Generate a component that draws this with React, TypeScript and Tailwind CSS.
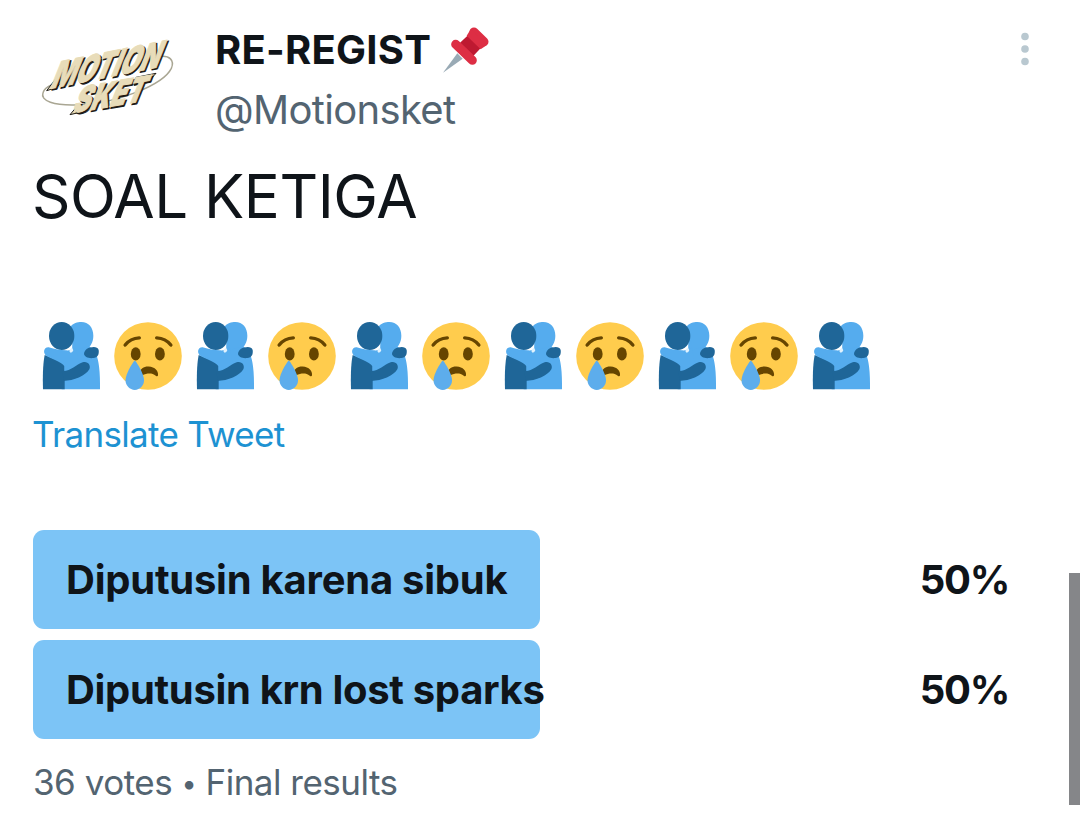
import { ReactNode } from "react";

type PollOption = {
  label: string;
  percent: number;
  tracking: string;
};

const options: PollOption[] = [
  { label: "Diputusin karena sibuk", percent: 50, tracking: "tracking-[-0.24px]" },
  { label: "Diputusin krn lost sparks", percent: 50, tracking: "tracking-[-0.33px]" },
];

const emojis = Array.from({ length: 11 }, (_, i) => (i % 2 === 0 ? "hug" : "cry"));

function LogoWord({ children, matrix, size, length }: { children: ReactNode; matrix: string; size: number; length: number }) {
  return (
    <g
      transform={matrix}
      fontFamily="Inter, sans-serif"
      fontWeight={900}
      fontSize={size}
      strokeLinejoin="round"
    >
      <text x="6" y="5" textLength={length} lengthAdjust="spacingAndGlyphs" fill="#1d1a14" stroke="#1d1a14" strokeWidth="4" aria-hidden="true">
        {children}
      </text>
      <text textLength={length} lengthAdjust="spacingAndGlyphs" fill="#e8dcb9" stroke="#e8dcb9" strokeWidth="3">
        {children}
      </text>
    </g>
  );
}

function Logo() {
  return (
    <svg viewBox="0 0 480 330" className="h-[110px] w-[160px] shrink-0 overflow-visible">
      <path
        d="M385 110C420 104 434 122 424 145C400 194 262 250 150 254C70 258 30 242 39 218C42 208 52 200 66 194"
        fill="none"
        stroke="#a9a693"
        strokeWidth="4.5"
      />
      {/* brush tails on the first and last letters */}
      <path d="M82 170L50 212L76 204L98 186ZM142 258L120 284L146 278L164 262ZM318 172L378 160L352 188L312 196Z" fill="#e8dcb9" stroke="#1d1a14" strokeWidth="3" strokeLinejoin="round" />
      <LogoWord matrix="matrix(1 -0.2 -0.4 1 58 207)" size={114} length={324}>
        MOTION
      </LogoWord>
      <LogoWord matrix="matrix(1 -0.17 -0.4 1 124 280)" size={110} length={212}>
        SKET
      </LogoWord>
    </svg>
  );
}

function Pin() {
  return (
    <svg viewBox="729 21 138 138" className="size-[46px]">
      <path d="M729 158L772 100L788 116Z" fill="#99aab5" />
      <path d="M780 68L812 38L850 76L820 108Z" fill="#be1931" />
      <path d="M767 73L817 121M822 36L852 65" stroke="#dd2e44" strokeWidth="27" strokeLinecap="round" />
      <path d="M812 28L862 74L842 88L800 47Z" fill="#dd2e44" />
    </svg>
  );
}

function Hug() {
  return (
    <svg viewBox="21 35 204 204" className="size-[68px]">
      <path d="M120 50C130 38 142 35 154 35C176 35 190 52 190 76C190 96 180 110 170 118L126 140L127 90Z" fill="#55acee" />
      <path d="M100 150L126 122L175 108C196 116 204 142 207 168C210 190 210 215 210 237H95Z" fill="#55acee" />
      <ellipse cx="95" cy="77" rx="38" ry="42" fill="#1f6698" />
      <path d="M39 237C38 205 38 165 44 134L104 158V237Z" fill="#1f6698" />
      <path d="M56 111C74 116 92 120 108 120C118 121 128 117 138 112L150 184H103V168C98 157 72 149 50 137C38 130 40 110 56 111Z" fill="#55acee" />
      <path d="M119 118L126 112L130 120Q128 127 122 127Q117 125 119 118Z" fill="#e1f2fd" />
      <path d="M98 182C122 183 138 163 158 156C172 151 184 164 178 177C166 197 132 211 100 212Z" fill="#1f6698" />
      <path d="M170 116C184 109 202 107 206 119C208 132 203 143 190 143C175 145 163 139 162 131C162 125 166 119 170 116Z" fill="#1f6698" />
    </svg>
  );
}

function Cry() {
  return (
    <svg viewBox="0 0 36 36" className="size-[68px]">
      <circle cx="18" cy="18" r="17.9" fill="#ffcc4d" />
      <path d="M5.9 12.2Q8.7 8.6 13.4 8.4M22.6 8.4Q27.3 8.6 30.1 12.2" fill="none" stroke="#664500" strokeWidth="1.8" strokeLinecap="round" />
      <ellipse cx="11.5" cy="16.9" rx="2.6" ry="3.5" fill="#664500" />
      <ellipse cx="24.3" cy="16.9" rx="2.6" ry="3.5" fill="#664500" />
      <path d="M13.5 27C13.8 24.8 15.8 23.4 18.3 23.5C21.8 23.6 23.6 26 23.3 28.2C23.2 28.8 22.6 28.8 22.1 28.4C20.2 27 17.8 27 14.9 28.2Z" fill="#664500" />
      <path d="M11 20.4C11.4 20.4 15.9 27.2 15.9 30.9C15.9 33.7 13.7 36 11 36C8.3 36 6.1 33.7 6.1 30.9C6.1 27.2 10.6 20.4 11 20.4Z" fill="#5dadec" />
    </svg>
  );
}

function Poll() {
  return (
    <div className="mt-[71px] flex flex-col gap-[11px]">
      {options.map((o) => (
        <div key={o.label} className="grid h-[99px] items-center text-[40px] font-bold">
          <div
            className="col-start-1 row-start-1 h-full rounded-[11px] bg-[#7cc4f6]"
            style={{ width: `${o.percent}%` }}
          />
          <div className="col-start-1 row-start-1 flex justify-between pr-[38px] pl-[33px]">
            <span className={`whitespace-nowrap ${o.tracking}`}>{o.label}</span>
            <span className="tracking-[-1.3px]">{o.percent}%</span>
          </div>
        </div>
      ))}
    </div>
  );
}

export default function App() {
  return (
    <div className="flex h-[827px] w-[1080px] overflow-hidden bg-white font-['Inter',sans-serif] text-[#0f1419]">
      <main className="w-[1069px] pt-5 pr-[22px] pl-[33px]">
        <header className="-ml-[3px] flex h-[140px]">
          <Logo />
          <div className="ml-[25px] flex-1 leading-[60px]">
            <div className="flex items-center text-[40px] font-bold">
              <span className="w-[228px] tracking-[0.25px] whitespace-nowrap">RE-REGIST</span>
              <Pin />
            </div>
            <p className="text-[40px] tracking-[-0.67px] text-[#536471]">@Motionsket</p>
          </div>
          <svg viewBox="0 0 10 34" className="mt-3 mr-[17px] h-[34px] w-[10px]" fill="#b9c8d0">
            <circle cx="5" cy="4.5" r="3.8" />
            <circle cx="5" cy="17" r="3.8" />
            <circle cx="5" cy="29.5" r="3.8" />
          </svg>
        </header>

        <h1 className="-ml-px text-[60px] leading-[73px] tracking-[-0.5px]">SOAL KETIGA</h1>

        <div className="mt-[89px] ml-1 flex gap-[9px]">
          {emojis.map((kind, i) => (kind === "hug" ? <Hug key={i} /> : <Cry key={i} />))}
        </div>

        <p className="mt-[19px] -ml-px text-[35px] leading-[50px] tracking-[-0.68px] text-[#1d92d2]">
          Translate Tweet
        </p>

        <Poll />

        <p className="mt-[18px] text-[35px] leading-[50px] tracking-[-0.5px] text-[#536471]">
          36 votes <span className="align-[2px] text-[27px]">•</span> Final results
        </p>
      </main>

      {/* scrollbar */}
      <div className="w-[11px] pt-[573px]">
        <div className="h-[232px] bg-[#858689]" />
      </div>
    </div>
  );
}
